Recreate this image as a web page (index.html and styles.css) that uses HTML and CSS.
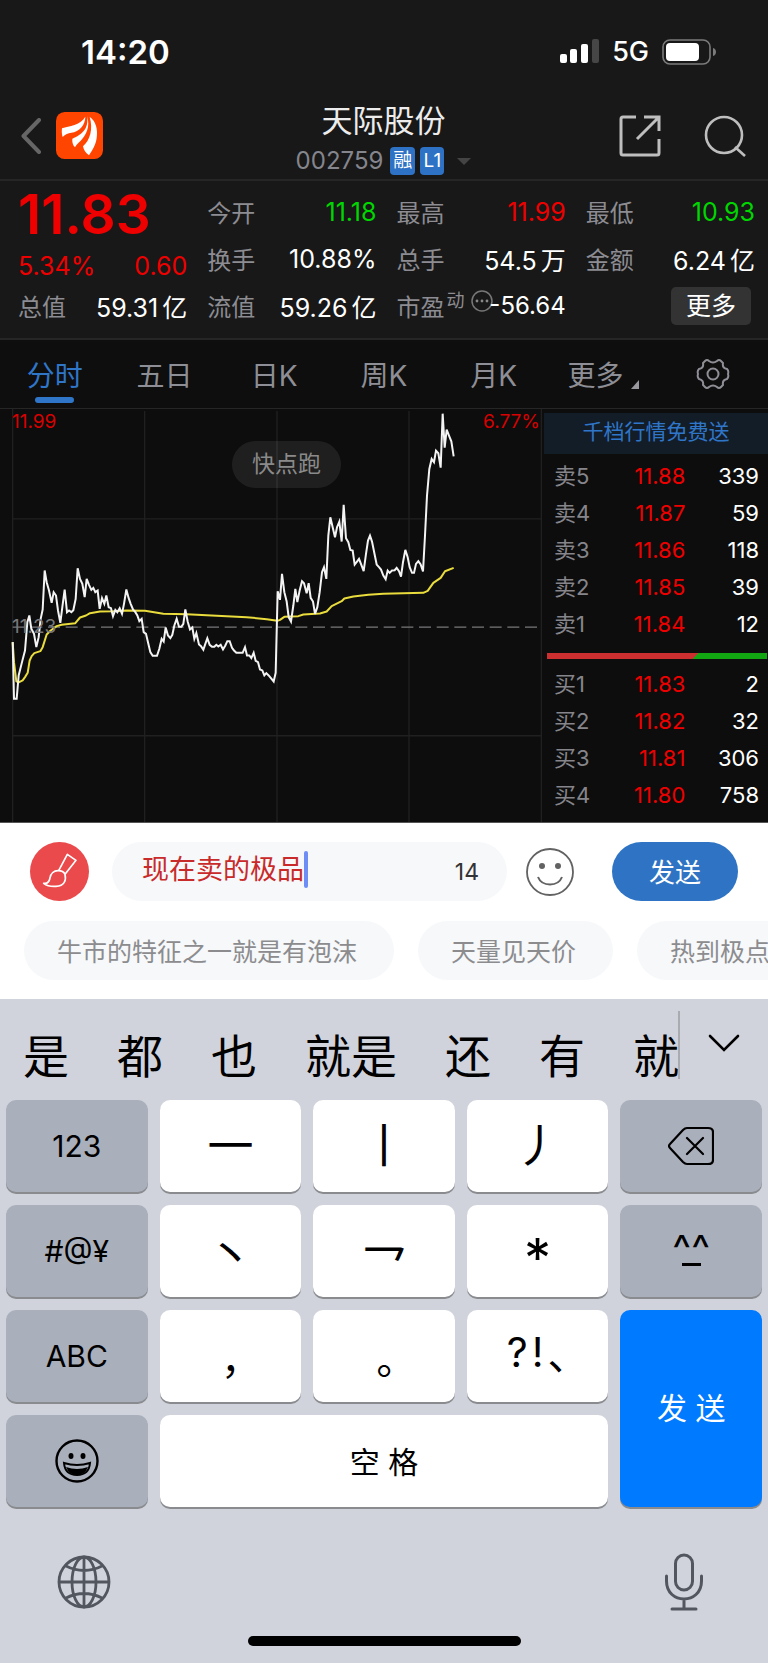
FILE: index.html
```html
<!DOCTYPE html>
<html lang="zh-CN">
<head>
<meta charset="utf-8">
<meta name="viewport" content="width=device-width, initial-scale=1">
<title>天际股份 002759</title>
<link rel="stylesheet" href="styles.css">
</head>
<body>
<div class="top">
  <div class="status">
    <span class="clock">14:20</span>
    <div class="status-right">
      <svg class="signal" viewBox="0 0 39 25"><rect x="0" y="15" width="7" height="9" rx="2" fill="#fff"/><rect x="10" y="10" width="7" height="14" rx="2" fill="#fff"/><rect x="21" y="5" width="7" height="19" rx="2" fill="#fff"/><rect x="32" y="0" width="7" height="24" rx="2" fill="#464646"/></svg>
      <span class="net">5G</span>
      <svg class="battery" viewBox="0 0 54 26"><rect x="1" y="1" width="47" height="24" rx="7" fill="none" stroke="#7b7b7b" stroke-width="1.6"/><rect x="4" y="4" width="33" height="18" rx="4" fill="#fff"/><path d="M51 9c4 1 4 7 0 8z" fill="#7b7b7b"/></svg>
    </div>
  </div>
  <header class="header">
    <div class="header-left">
      <button class="icon-btn" aria-label="返回"><svg width="20" height="36" viewBox="0 0 20 36"><path d="M18 2 2.500 18 18 34" fill="none" stroke="#666" stroke-width="4" stroke-linecap="round" stroke-linejoin="round"/></svg></button>
      <svg class="logo" viewBox="0 0 141 141"><rect width="141" height="141" rx="26" fill="#ff4500"/><g fill="#fff"><path d="M18 49C40 42 72 40 88 14C88 38 70 60 46 62C36 63 28 67 20 75C17 66 17 57 18 49Z"/><path d="M93 12C104 44 90 70 74 86C66 93 61 98 57 106C50 98 48 90 49 80C74 70 100 52 93 12Z"/><path d="M101 14C120 28 126 52 122 78C119 100 108 116 99 130C90 124 83 114 81 103C102 84 112 52 101 14Z"/></g></svg>
    </div>
    <div class="title">
      <h1>天际股份</h1>
      <div class="code-row"><span class="code">002759</span><span class="badge">融</span><span class="badge">L1</span><span class="caret-down"></span></div>
    </div>
    <div class="header-right">
      <button class="icon-btn" aria-label="分享"><svg width="42" height="42" viewBox="0 0 42 42" fill="none" stroke="#bebebe" stroke-width="3"><path d="M17 2H4Q2 2 2 4V38Q2 40 4 40H38Q40 40 40 38V24M25 2H40V16M39 3 18 24"/></svg></button>
      <button class="icon-btn" aria-label="搜索"><svg width="42" height="42" viewBox="0 0 42 42" fill="none" stroke="#bebebe" stroke-width="2.600"><circle cx="20" cy="20" r="18"/><path d="M31 32 41 41"/></svg></button>
    </div>
  </header>
  <section class="quote">
    <div class="col">
      <div class="price up">11.83</div>
      <div class="row change up"><span>5.34%</span><span>0.60</span></div>
      <div class="row"><span class="label">总值</span><span>59.31<span class="unit">亿</span></span></div>
    </div>
    <div class="col">
      <div class="row"><span class="label">今开</span><span class="down">11.18</span></div>
      <div class="row"><span class="label">换手</span><span>10.88%</span></div>
      <div class="row"><span class="label">流值</span><span>59.26<span class="unit">亿</span></span></div>
    </div>
    <div class="col">
      <div class="row"><span class="label">最高</span><span class="up">11.99</span></div>
      <div class="row"><span class="label">总手</span><span>54.5<span class="unit">万</span></span></div>
      <div class="row pe"><span class="label">市盈<sup>动</sup></span><svg class="dots" viewBox="0 0 22 22"><circle cx="11" cy="11" r="10" fill="none" stroke="#777" stroke-width="1.500"/><g fill="#888"><circle cx="6" cy="11" r="1.400"/><circle cx="11" cy="11" r="1.400"/><circle cx="16" cy="11" r="1.400"/></g></svg><span>-56.64</span></div>
    </div>
    <div class="col">
      <div class="row"><span class="label">最低</span><span class="down">10.93</span></div>
      <div class="row"><span class="label">金额</span><span>6.24<span class="unit">亿</span></span></div>
      <div class="row more-row"><button class="more">更多</button></div>
    </div>
  </section>
</div>

<nav class="tabs">
  <button class="tab active">分时</button>
  <button class="tab">五日</button>
  <button class="tab">日K</button>
  <button class="tab">周K</button>
  <button class="tab">月K</button>
  <button class="tab tab-more">更多<svg width="8" height="9" viewBox="0 0 8 9"><path d="M8 0V9H0Z" fill="#98989e"/></svg></button>
  <button class="tab" aria-label="设置"><svg width="34" height="32" viewBox="0 0 34 32" fill="none" stroke="#8e8e96" stroke-width="2"><path d="M13 3Q17 6 21 3Q23 1 25 3L27 5Q26 10 31 11Q33 13 32 16Q33 19 31 21Q26 22 27 27L25 29Q23 31 21 29Q17 26 13 29Q11 31 9 29L7 27Q8 22 3 21Q1 19 2 16Q1 13 3 11Q8 10 7 5L9 3Q11 1 13 3Z"/><circle cx="17" cy="16" r="5.500"/></svg></button>
</nav>

<main class="market">
  <div class="chart">
    <svg class="plot" viewBox="0 30 1626 1240" preserveAspectRatio="none" fill="none">
      <g stroke="#202020" stroke-width="4"><path d="M38 30V1270M434 36V1270M831 36V1270M1227 36V1270M1624 30V1270M38 360H1624M38 1011H1624"/></g>
      <path d="M38 685H1616" stroke="#78787c" stroke-width="4" stroke-dasharray="36 17"/>
      <polyline stroke="#e9dc3c" stroke-width="6" stroke-linejoin="round" points="38,730 42,790 49,848 56,851 68,845 75,835 83,822 89,785 95,772 103,763 121,757 128,745 140,707 152,695 170,682 185,678 226,673 240,656 258,650 270,643 300,638 340,637 380,635 435,636 490,645 560,646 650,651 740,655 800,661 832,666 840,663 853,654 895,652 910,647 960,644 980,638 995,622 1025,607 1033,599 1060,593 1105,588 1150,585 1210,583 1270,582 1283,576 1300,552 1322,537 1335,517 1361,507"/>
      <polyline stroke="#f4f4f4" stroke-width="6" points="38,730 42,900 50,900 56,830 66,790 75,755 82,670 88,650 94,690 102,705 109,745 116,715 122,660 128,632 134,515 140,550 147,575 155,612 161,580 168,590 174,635 181,672 187,625 194,572 201,640 207,635 214,640 220,634 227,600 233,508 240,540 247,555 254,595 260,540 267,558 274,573 280,567 286,580 293,575 299,630 306,598 313,615 319,590 326,625 333,628 339,652 346,633 352,640 359,628 366,645 372,615 379,572 386,598 392,615 399,632 406,640 412,650 418,667 425,660 431,700 438,705 445,735 451,760 458,771 471,771 478,750 485,720 491,728 497,686 504,710 511,718 517,708 523,680 530,660 537,684 544,684 550,675 556,632 563,668 570,692 577,686 583,720 589,703 597,737 603,742 610,753 616,735 622,718 629,738 636,744 643,744 649,738 655,743 662,738 669,752 676,740 682,727 689,727 696,747 702,755 709,762 728,762 735,745 741,770 748,770 754,778 761,762 767,786 774,790 780,812 787,815 793,830 799,823 806,830 821,848 827,822 833,577 840,603 846,525 853,580 860,608 866,655 873,668 880,620 886,570 892,610 899,575 906,547 912,553 920,583 926,553 932,597 939,608 945,645 952,625 959,580 966,520 972,505 979,540 985,410 991,355 998,385 1005,415 1011,385 1018,368 1025,428 1031,318 1038,418 1045,430 1051,453 1058,455 1064,497 1071,488 1077,480 1084,498 1091,517 1098,465 1104,425 1110,410 1116,428 1130,497 1137,505 1143,512 1150,530 1157,541 1163,515 1169,522 1176,515 1184,514 1190,507 1197,517 1203,533 1209,490 1216,453 1223,475 1229,505 1236,522 1242,522 1248,495 1255,487 1262,497 1269,518 1275,410 1281,290 1288,210 1295,180 1302,190 1308,155 1315,163 1322,206 1328,44 1334,146 1340,92 1347,110 1354,127 1361,172"/>
    </svg>
    <span class="axis axis-high">11.99</span>
    <span class="axis axis-pct">6.77%</span>
    <span class="axis axis-mid">11.23</span>
    <span class="bullet">快点跑</span>
  </div>
  <aside class="book">
    <a class="promo" href="#">千档行情免费送</a>
    <table class="levels">
      <tr><th>卖5</th><td>11.88</td><td>339</td></tr>
      <tr><th>卖4</th><td>11.87</td><td>59</td></tr>
      <tr><th>卖3</th><td>11.86</td><td>118</td></tr>
      <tr><th>卖2</th><td>11.85</td><td>39</td></tr>
      <tr><th>卖1</th><td>11.84</td><td>12</td></tr>
    </table>
    <div class="ratio"></div>
    <table class="levels">
      <tr><th>买1</th><td>11.83</td><td>2</td></tr>
      <tr><th>买2</th><td>11.82</td><td>32</td></tr>
      <tr><th>买3</th><td>11.81</td><td>306</td></tr>
      <tr><th>买4</th><td>11.80</td><td>758</td></tr>
    </table>
  </aside>
</main>

<section class="compose">
  <div class="compose-row">
    <button class="brush" aria-label="颜色"><svg width="59" height="59" viewBox="0 0 177 177" fill="none" stroke="#fff" stroke-width="5" stroke-linejoin="round"><path d="M86 86 112 37 138 55 105 97"/><path d="M105 97C109 114 104 132 78 133C62 134 50 131 41 124C52 126 58 118 60 108C62 94 72 86 84 86C94 86 102 90 105 97Z"/></svg></button>
    <div class="field">
      <input class="message" type="text" value="现在卖的极品" aria-label="弹幕"><span class="cursor"></span>
      <span class="count">14</span>
    </div>
    <button class="icon-btn smile" aria-label="表情"><svg width="48" height="48" viewBox="0 0 48 48" fill="none" stroke="#626262" stroke-width="1.800"><circle cx="24" cy="24" r="23"/><path d="M12 29C16 39 32 39 36 29" stroke-width="2"/><g fill="#626262" stroke="none"><circle cx="16" cy="18" r="3"/><circle cx="32" cy="18" r="3"/></g></svg></button>
    <button class="send">发送</button>
  </div>
  <div class="chips">
    <button class="chip">牛市的特征之一就是有泡沫</button>
    <button class="chip">天量见天价</button>
    <button class="chip">热到极点</button>
  </div>
</section>

<section class="keyboard">
  <div class="candidates">
    <div class="words">
      <button>是</button><button>都</button><button>也</button><button>就是</button><button>还</button><button>有</button><button>就</button>
    </div>
    <button class="expand" aria-label="展开"><svg width="32" height="20" viewBox="0 0 32 20"><path d="M2 2 16 16 30 2" fill="none" stroke="#000" stroke-width="2.600" stroke-linecap="round"/></svg></button>
  </div>
  <div class="keys">
    <button class="key dark">123</button>
    <button class="key stroke">一</button>
    <button class="key stroke">丨</button>
    <button class="key stroke">丿</button>
    <button class="key dark" aria-label="删除"><svg width="46" height="40" viewBox="0 0 46 40" fill="none" stroke="#000" stroke-width="2.200" stroke-linecap="round" stroke-linejoin="round"><path d="M19 2H40Q45 2 45 6V34Q45 38 40 38H19Q17 38 15 36L2 22Q0 20 2 18L15 4Q17 2 19 2ZM19 12 35 28M35 12 19 28"/></svg></button>

    <button class="key dark">#@¥</button>
    <button class="key stroke dot">丶</button>
    <button class="key stroke turn">乛</button>
    <button class="key star">*</button>
    <button class="key dark face">^^</button>

    <button class="key dark">ABC</button>
    <button class="key punct">，</button>
    <button class="key punct">。</button>
    <button class="key marks"><span>?</span><span>!</span><span>、</span></button>
    <button class="key go">发 送</button>

    <button class="key dark" aria-label="表情符号"><svg width="44" height="44" viewBox="0 0 44 44"><circle cx="22" cy="22" r="20.500" fill="none" stroke="#000" stroke-width="2.400"/><ellipse cx="16" cy="17" rx="2.500" ry="3"/><ellipse cx="28" cy="17" rx="2.500" ry="3"/><path d="M9 24Q22 28 35 24Q34 36 22 36Q10 36 9 24Z" fill="none" stroke="#000" stroke-width="2"/><path d="M11 28Q22 32 33 28Q30 36 22 36Q14 36 11 28Z"/></svg></button>
    <button class="key space">空 格</button>
  </div>
  <div class="dock">
    <button class="icon-btn" aria-label="切换键盘"><svg width="54" height="54" viewBox="0 0 54 54" fill="none" stroke="#52565e" stroke-width="2.800"><circle cx="27" cy="27" r="25"/><ellipse cx="27" cy="27" rx="12" ry="25"/><path d="M27 2V52M2 27H52M9 11Q27 20 45 11M9 43Q27 34 45 43"/></svg></button>
    <button class="icon-btn" aria-label="语音输入"><svg width="38" height="58" viewBox="0 0 38 58" fill="none" stroke="#52565e" stroke-width="3" stroke-linecap="round"><rect x="10.500" y="2" width="17" height="35" rx="8.500"/><path d="M1.500 23V28C1.500 52 36.500 52 36.500 28V23M19 46V55M7 56H31"/></svg></button>
  </div>
  <div class="home"></div>
</section>
</body>
</html>
```
FILE: styles.css
```css
* { box-sizing: border-box; }
body {
  margin: 0;
  background: #d0d3db;
  color: #fff;
  font-family: Inter, "Noto Sans CJK SC", sans-serif;
  overflow-x: hidden;
}
button, input {
  font: inherit;
  color: inherit;
  border: 0;
  padding: 0;
  margin: 0;
  background: none;
}
svg { display: block; }
.icon-btn { display: flex; }
.up { color: #ee0000; }
.down { color: #00d600; }

/* status bar */
.top { background: #181818; }
.status {
  height: 101px;
  padding: 2px 52px 0 81px;
  display: flex;
  justify-content: space-between;
  align-items: center;
}
.clock { font-size: 33px; font-weight: 600; }
.status-right { display: flex; align-items: center; gap: 13px; }
.signal { width: 39px; height: 25px; }
.net { font-size: 27px; font-weight: 500; }
.battery { width: 54px; height: 26px; }

/* header */
.header {
  height: 80px;
  padding: 0 22px 0 21px;
  border-bottom: 2px solid #262626;
  display: grid;
  grid-template-columns: 1fr auto 1fr;
  align-items: start;
}
.header-left, .header-right { display: flex; align-items: center; height: 69px; }
.header-left { gap: 15px; }
.header-right { justify-content: flex-end; gap: 43px; }
.logo { width: 47px; height: 47px; }
.title h1 {
  margin: 0 0 6px;
  font-size: 31px;
  font-weight: 400;
  line-height: 40px;
  text-align: center;
  color: #ececec;
}
.code-row { display: flex; align-items: center; line-height: 28px; gap: 5px; }
.code { font-size: 24px; color: #85858d; margin-right: 2px; }
.badge {
  min-width: 24px;
  padding: 0 3px;
  border-radius: 4px;
  background: #2d72c4;
  font-size: 19px;
  text-align: center;
}
.caret-down {
  border: 7px solid transparent;
  border-top-color: #444;
  border-bottom: 0;
  margin-left: 8px;
}

/* quote */
.quote {
  padding: 7px 13px 9px 18px;
  border-bottom: 2px solid #262626;
  display: grid;
  grid-template-columns: repeat(4, 1fr);
  gap: 20px;
  font-size: 25px;
}
.row {
  height: 47px;
  display: flex;
  justify-content: space-between;
  align-items: center;
  white-space: nowrap;
}
.price { font-size: 55px; font-weight: 600; line-height: 53px; }
.change { height: 41px; align-items: flex-end; line-height: 32px; }
.price + .change + .row { height: 47px; }
.label { color: #8c8c92; font-size: 24px; }
.label sup { font-size: 18px; line-height: 0; margin-left: 2px; }
.unit { margin-left: 4px; }
.dots { width: 22px; height: 22px; margin: 0 -4px 10px auto; }
.pe { font-size: 24px; }
.more-row { justify-content: flex-end; padding-right: 4px; }
.more {
  width: 80px;
  height: 38px;
  border-radius: 5px;
  background: #333;
  font-size: 25px;
  line-height: 38px;
}

/* tabs */
.tabs {
  height: 69px;
  background: #0e0e0e;
  border-bottom: 1px solid #262626;
  display: grid;
  grid-template-columns: repeat(7, 1fr);
}
.tab {
  display: flex;
  justify-content: center;
  align-items: center;
  font-size: 28px;
  color: #8e8e96;
  position: relative;
}
.active { color: #2f76c9; }
.active::after {
  content: "";
  position: absolute;
  bottom: 5px;
  width: 39px;
  height: 6px;
  border-radius: 3px;
  background: #2f76c9;
}
.tab-more { gap: 8px; }
.tab-more svg { align-self: flex-end; margin-bottom: 19px; }

/* market */
.market {
  display: grid;
  grid-template-columns: 542fr 226fr;
  background: #0d0d0d;
  border-bottom: 1px solid #555;
}
.chart { position: relative; }
.plot { width: 100%; height: 413px; }
.axis { position: absolute; font-size: 19px; line-height: 24px; color: #d80000; }
.axis-high { left: 12px; top: 1px; }
.axis-pct { right: 2px; top: 1px; }
.axis-mid { left: 12px; top: 206px; color: #77777b; }
.bullet {
  position: absolute;
  left: 232px;
  top: 32px;
  padding: 0 20px;
  border-radius: 24px;
  background: rgba(255, 255, 255, 0.08);
  color: #8a8a8a;
  font-size: 23px;
  line-height: 47px;
}
.book { padding: 4px 0 0 2px; }
.promo {
  display: block;
  padding-bottom: 3px;
  background: #131d28;
  color: #2f76c9;
  font-size: 21px;
  line-height: 38px;
  text-align: center;
  text-decoration: none;
}
.levels {
  width: 100%;
  margin-top: 4px;
  border-collapse: collapse;
  table-layout: fixed;
  font-size: 22px;
  line-height: 37px;
}
.levels th, .levels td { padding: 0; font-weight: 400; text-align: right; }
.levels th { width: 30%; padding-left: 10px; text-align: left; color: #85858b; }
.levels td { color: #fff; padding-right: 9px; }
.levels th + td { color: #ee0000; width: 34%; padding-right: 2px; }
.ratio {
  height: 6px;
  margin: 10px 1px 0 3px;
  background: linear-gradient(135deg, #cc2f2f 67%, #12a612 67%);
}
.ratio + .levels { margin-top: 7px; }

/* compose */
.compose { background: #fff; height: 176px; padding-top: 19px; overflow: hidden; }
.compose-row { display: flex; align-items: center; padding: 0 30px; }
.brush { width: 59px; height: 59px; border-radius: 50%; background: #eb4a4c; }
.field {
  flex: 1;
  height: 59px;
  margin-left: 23px;
  padding: 0 28px 0 30px;
  border-radius: 30px;
  background: #f6f8fa;
  display: flex;
  align-items: center;
}
.message {
  width: 162px;
  height: 44px;
  padding-bottom: 8px;
  font-size: 27px;
  line-height: 36px;
  color: #c92a2a;
  outline: 0;
}
.cursor { width: 4px; height: 37px; margin-bottom: 4px; border-radius: 2px; background: #6e8ef5; }
.count { margin-left: auto; font-size: 23px; color: #333; }
.smile { margin: 0 38px 0 19px; }
.send {
  width: 126px;
  height: 59px;
  padding-bottom: 2px;
  border-radius: 30px;
  background: #2f74c4;
  font-size: 26px;
}
.chips { display: flex; gap: 24px; margin-top: 20px; padding-left: 24px; }
.chip {
  flex: none;
  height: 59px;
  padding: 0 37px 2px 33px;
  border-radius: 30px;
  background: #f6f8fa;
  color: #8c8c8f;
  font-size: 25px;
  white-space: nowrap;
}

/* keyboard */
.keyboard { color: #000; }
.candidates { height: 101px; display: flex; padding: 12px 28px 21px 23px; }
.words {
  flex: 1;
  display: flex;
  gap: 48px;
  overflow: hidden;
  border-right: 2px solid #a9abb1;
  font-size: 46px;
}
.words button { flex: none; padding-top: 16px; line-height: 58px; }
.expand { margin: 23px 0 0 28px; align-self: flex-start; }
.keys {
  display: grid;
  grid-template-columns: repeat(5, 1fr);
  grid-auto-rows: 92px;
  gap: 13px 12px;
  padding: 0 6px;
}
.key {
  display: flex;
  align-items: center;
  justify-content: center;
  border-radius: 10px;
  background: #fff;
  box-shadow: 0 2px 0 #898b8f;
  font-size: 30px;
}
.dark { background: #a9afbb; }
.stroke { font-size: 46px; line-height: 46px; padding-bottom: 2px; }
.dot { padding-top: 8px; }
.turn { padding-top: 32px; }
.star { font-size: 54px; padding-top: 12px; }
.face { flex-direction: column; font-size: 40px; line-height: 28px; padding-bottom: 2px; }
.face::after {
  content: "";
  width: 19px;
  height: 3px;
  background: #000;
}
.punct { font-family: "Noto Sans CJK TC", sans-serif; font-size: 40px; padding-top: 26px; }
.marks { font-size: 41px; gap: 4px; padding: 0 0 8px 20px; }
.go { grid-column: 5; grid-row: 3 / span 2; padding-bottom: 6px; background: #007aff; color: #fff; }
.space { grid-column: 2 / span 3; padding-bottom: 2px; }
.dock { display: flex; justify-content: space-between; align-items: center; padding: 46px 65px 0 57px; }
.home {
  width: 273px;
  height: 10px;
  margin: 25px auto 16px;
  border-radius: 5px;
  background: #000;
}
```
